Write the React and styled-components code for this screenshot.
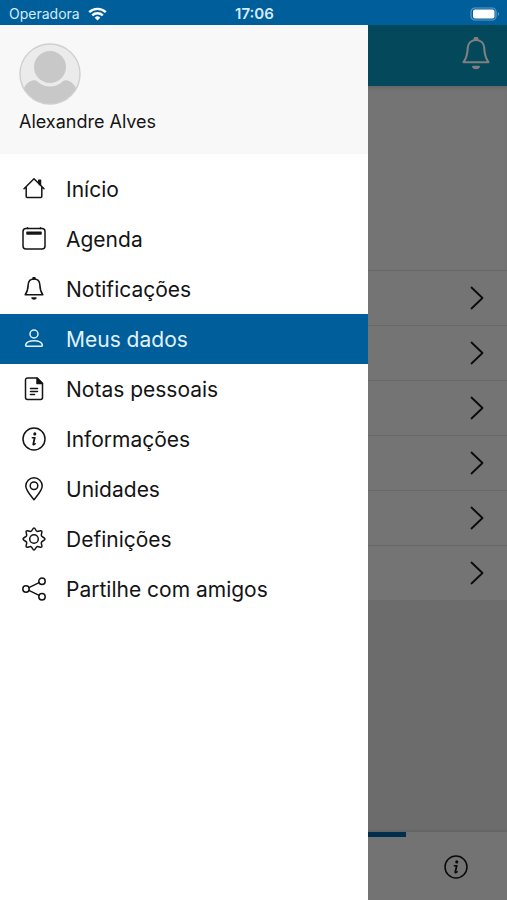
import React from "react";
import styled, { createGlobalStyle, css } from "styled-components";

const Global = createGlobalStyle`
  *, *::before, *::after { box-sizing: border-box; }
  body { margin: 0; font-family: Inter, "Liberation Sans", sans-serif; color: #141414; }
  button { font: inherit; color: inherit; border: 0; padding: 0; margin: 0; background: none; cursor: pointer; }
  ul { list-style: none; margin: 0; padding: 0; }
`;

const Phone = styled.div`
  min-height: 100vh;
  display: flex;
  flex-direction: column;
`;

const StatusBar = styled.header`
  height: 25px;
  padding: 2px 7px 0 9px;
  display: grid;
  grid-template-columns: 1fr auto 1fr;
  align-items: center;
  background: #005f9b;
  color: #d5ebfa;
  font-size: 14px;
  line-height: 20px;
`;

const Carrier = styled.div`
  display: flex;
  align-items: center;
  gap: 8px;
`;

const Clock = styled.time`
  font-weight: 600;
  font-size: 15px;
`;

const Battery = styled.svg`
  justify-self: end;
`;

const Stage = styled.div`
  flex: 1;
  display: grid;
  > * { grid-area: 1 / 1; }
`;

const Page = styled.main`
  display: flex;
  flex-direction: column;
  background: #d9d9d9;
`;

const TopBar = styled.div`
  height: 61px;
  display: flex;
  align-items: center;
  justify-content: flex-end;
  padding-right: 14px;
  background: #0890b8;
  color: #ffffff;
`;

const Summary = styled.div`
  height: 184px;
  background: #e8e8e8;
  box-shadow: inset 0 4px 4px -2px rgba(0, 0, 0, 0.12);
`;

const PageRow = styled.button`
  width: 100%;
  height: 55px;
  display: flex;
  align-items: center;
  justify-content: flex-end;
  padding-right: 23px;
  border-top: 1px solid #d0d0d0;
  background: #e8e8e8;
`;

const TabBar = styled.nav`
  height: 68px;
  margin-top: auto;
  display: grid;
  grid-template-columns: repeat(5, 1fr);
  background: #e6e6e6;
  box-shadow: 0 -1px 3px rgba(0, 0, 0, 0.12);
`;

const Tab = styled.button`
  display: grid;
  place-items: center;
  padding-bottom: 4px;
  border-top: 5px solid ${(p) => (p.$active ? "#005f9b" : "transparent")};
`;

const Shade = styled.div`
  background: rgba(0, 0, 0, 0.5);
  z-index: 1;
`;

const Drawer = styled.aside`
  width: calc(100% - 139px);
  background: #ffffff;
  z-index: 2;
`;

const Profile = styled.div`
  height: 129px;
  padding: 18px 19px;
  background: #f8f8f8;
  font-size: 18px;
  line-height: 24px;
`;

const Avatar = styled.svg`
  display: block;
  margin-bottom: 5px;
`;

const Menu = styled.ul`
  padding-top: 10px;
`;

const MenuButton = styled.button`
  width: 100%;
  height: 50px;
  display: flex;
  align-items: center;
  gap: 20px;
  padding-left: 22px;
  font-size: 21px;
  text-align: left;
  ${(p) => p.$active && css`
    background: #005f9b;
    color: #e2f1fc;
  `}
`;

const Line = styled.svg`
  flex: none;
  fill: none;
  stroke: currentColor;
  stroke-width: 1.5;
  stroke-linecap: round;
  stroke-linejoin: round;
  .solid { fill: currentColor; }
`;

const icons = {
  home: (
    <>
      <path d="M2 11.8 12 1.800 22 11.800M4.200 9.800V19.500a1 1 0 0 0 1 1h13.600a1 1 0 0 0 1-1v-9.700" />
      <path className="solid" d="M16.800 3.200h1.700v5l-1.700-1.700z" />
    </>
  ),
  calendar: (
    <>
      <rect x="1" y="1.500" width="22" height="20.500" rx="3" />
      <path d="M5.500.8v.7M18.500.8v.7" />
      <rect className="solid" x="5" y="5.300" width="14" height="1.600" />
    </>
  ),
  bell: (
    <>
      <path d="M12 2.100c3.500 0 5.600 2.400 5.800 5.500.2 5 .7 7 3 10.200H3.200c2.300-3.200 2.800-5.200 3-10.200C6.400 4.500 8.500 2.100 12 2.100z" />
      <path className="solid" d="M11 1.500a1 1 0 0 1 2 0v.6h-2zM10 21h4c-.5 1.300-3.500 1.300-4 0z" />
    </>
  ),
  person: (
    <>
      <circle cx="12" cy="7" r="4" />
      <path d="M4.500 19.300c-.8 0-1-.8-.8-1.500.8-3 4-4 8.300-4s7.500 1 8.300 4c.2.7 0 1.500-.8 1.500z" />
    </>
  ),
  note: (
    <>
      <path d="M15 1H5.500a2 2 0 0 0-2 2v17.600a2 2 0 0 0 2 2h13a2 2 0 0 0 2-2V6.500z" />
      <path className="solid" d="M15 1v5.500h5.500z" />
      <path d="M8.500 11.500h7M8.500 14.500h7M8.500 17.500h4" />
    </>
  ),
  info: (
    <>
      <circle cx="12" cy="12" r="11" />
      <circle className="solid" cx="12.8" cy="6.9" r=".8" />
      <path d="M10.300 10.700h2.300l-1.500 6.500c-.1.800 1.100.6 2-.5M12.900 10.700l-1.500 6.300" />
    </>
  ),
  pin: (
    <>
      <path d="M12 22.800C9 18.800 3.800 13.500 3.800 9a8.200 8.200 0 0 1 16.400 0c0 4.500-5.200 9.800-8.200 13.800z" />
      <circle cx="12" cy="8.800" r="3.800" />
    </>
  ),
  gear: (
    <>
      <path d="M12 1c1.400 0 1.500 2.700 3 3.300 1.500.6 3.700-1.300 4.700-.3s-.9 3.200-.3 4.700c.6 1.500 3.600 1.700 3.600 3.300s-3 1.800-3.600 3.300c-.6 1.500 1.300 3.700.3 4.700s-3.200-.9-4.700-.3C13.500 20.300 13.400 23 12 23s-1.500-2.700-3-3.300c-1.500-.6-3.700 1.300-4.700.3s.9-3.200.3-4.700C4 13.800 1 13.600 1 12s3-1.800 3.600-3.300C5.200 7.200 3.300 5 4.300 4s3.200.9 4.700.3C10.500 3.700 10.600 1 12 1z" />
      <circle cx="12" cy="12" r="4.3" />
    </>
  ),
  share: (
    <>
      <circle cx="4" cy="12" r="3.2" />
      <circle cx="20" cy="4.2" r="3.2" />
      <circle cx="20" cy="19.8" r="3.2" />
      <path d="M6.900 10.600 17.100 5.600M6.900 13.400l10.200 5" />
    </>
  ),
};

const Icon = ({ name, size = 24 }) => (
  <Line width={size} height={size} viewBox="0 0 24 24" aria-hidden="true">
    {icons[name]}
  </Line>
);

const menu = [
  { icon: "home", label: "Início" },
  { icon: "calendar", label: "Agenda" },
  { icon: "bell", label: "Notificações" },
  { icon: "person", label: "Meus dados" },
  { icon: "note", label: "Notas pessoais" },
  { icon: "info", label: "Informações" },
  { icon: "pin", label: "Unidades" },
  { icon: "gear", label: "Definições" },
  { icon: "share", label: "Partilhe com amigos" },
];

const tabs = ["home", "calendar", "bell", "person", "info"].map((icon) =>
  menu.find((item) => item.icon === icon)
);

export default function App() {
  return (
    <>
      <Global />
      <Phone>
        <StatusBar>
          <Carrier>
            Operadora
            <svg width="19" height="14" viewBox="0 0 19 14" fill="none" stroke="#fff" strokeWidth="2.4" aria-hidden="true">
              <path d="M1.200 5.200a12 12 0 0 1 16.600 0M4.200 8.300a7.700 7.700 0 0 1 10.600 0" />
              <path d="M9.500 13.500 6.700 10.700a4 4 0 0 1 5.600 0z" fill="#fff" stroke="none" />
            </svg>
          </Carrier>
          <Clock>17:06</Clock>
          <Battery width="30" height="14" viewBox="0 0 30 14" aria-hidden="true">
            <rect x="1" y="1" width="25" height="12" rx="3.8" fill="none" stroke="#5f9fca" strokeWidth="1.2" />
            <rect x="3" y="2.500" width="21.500" height="9" rx="2" fill="#fff" />
            <path d="M27.800 5v4c1.600-.6 1.600-3.400 0-4z" fill="#5f9fca" />
          </Battery>
        </StatusBar>
        <Stage>
          <Page>
            <TopBar>
              <button type="button" aria-label="Notificações">
                <Icon name="bell" size={34} />
              </button>
            </TopBar>
            <Summary />
            {menu.slice(3).map((item) => (
              <PageRow key={item.label} type="button" aria-label={item.label}>
                <Line width="14" height="24" viewBox="0 0 14 24" aria-hidden="true">
                  <path d="m1.500 1.500 11 10.500-11 10.500" strokeWidth="1.8" />
                </Line>
              </PageRow>
            ))}
            <TabBar>
              {tabs.map(({ icon, label }) => (
                <Tab key={icon} type="button" aria-label={label} $active={icon === "person"}>
                  <Icon name={icon} />
                </Tab>
              ))}
            </TabBar>
          </Page>
          <Shade />
          <Drawer>
            <Profile>
              <Avatar width="62" height="62" viewBox="0 0 62 62" aria-hidden="true">
                <defs>
                  <clipPath id="disc"><circle cx="31" cy="31" r="30" /></clipPath>
                </defs>
                <circle cx="31" cy="31" r="30" fill="#ebebeb" />
                <g clipPath="url(#disc)" fill="#c8c8c8">
                  <path d="M4 47c4-9 11-12 15-8 7 6 17 6 24 0 4-4 11-1 15 8v15H4z" />
                  <circle cx="31" cy="24" r="16" />
                </g>
                <circle cx="31" cy="31" r="30" fill="none" stroke="#cfcfcf" strokeWidth="1.4" />
              </Avatar>
              Alexandre Alves
            </Profile>
            <nav>
              <Menu>
                {menu.map((item) => (
                  <li key={item.label}>
                    <MenuButton type="button" $active={item.icon === "person"}>
                      <Icon name={item.icon} />
                      {item.label}
                    </MenuButton>
                  </li>
                ))}
              </Menu>
            </nav>
          </Drawer>
        </Stage>
      </Phone>
    </>
  );
}
